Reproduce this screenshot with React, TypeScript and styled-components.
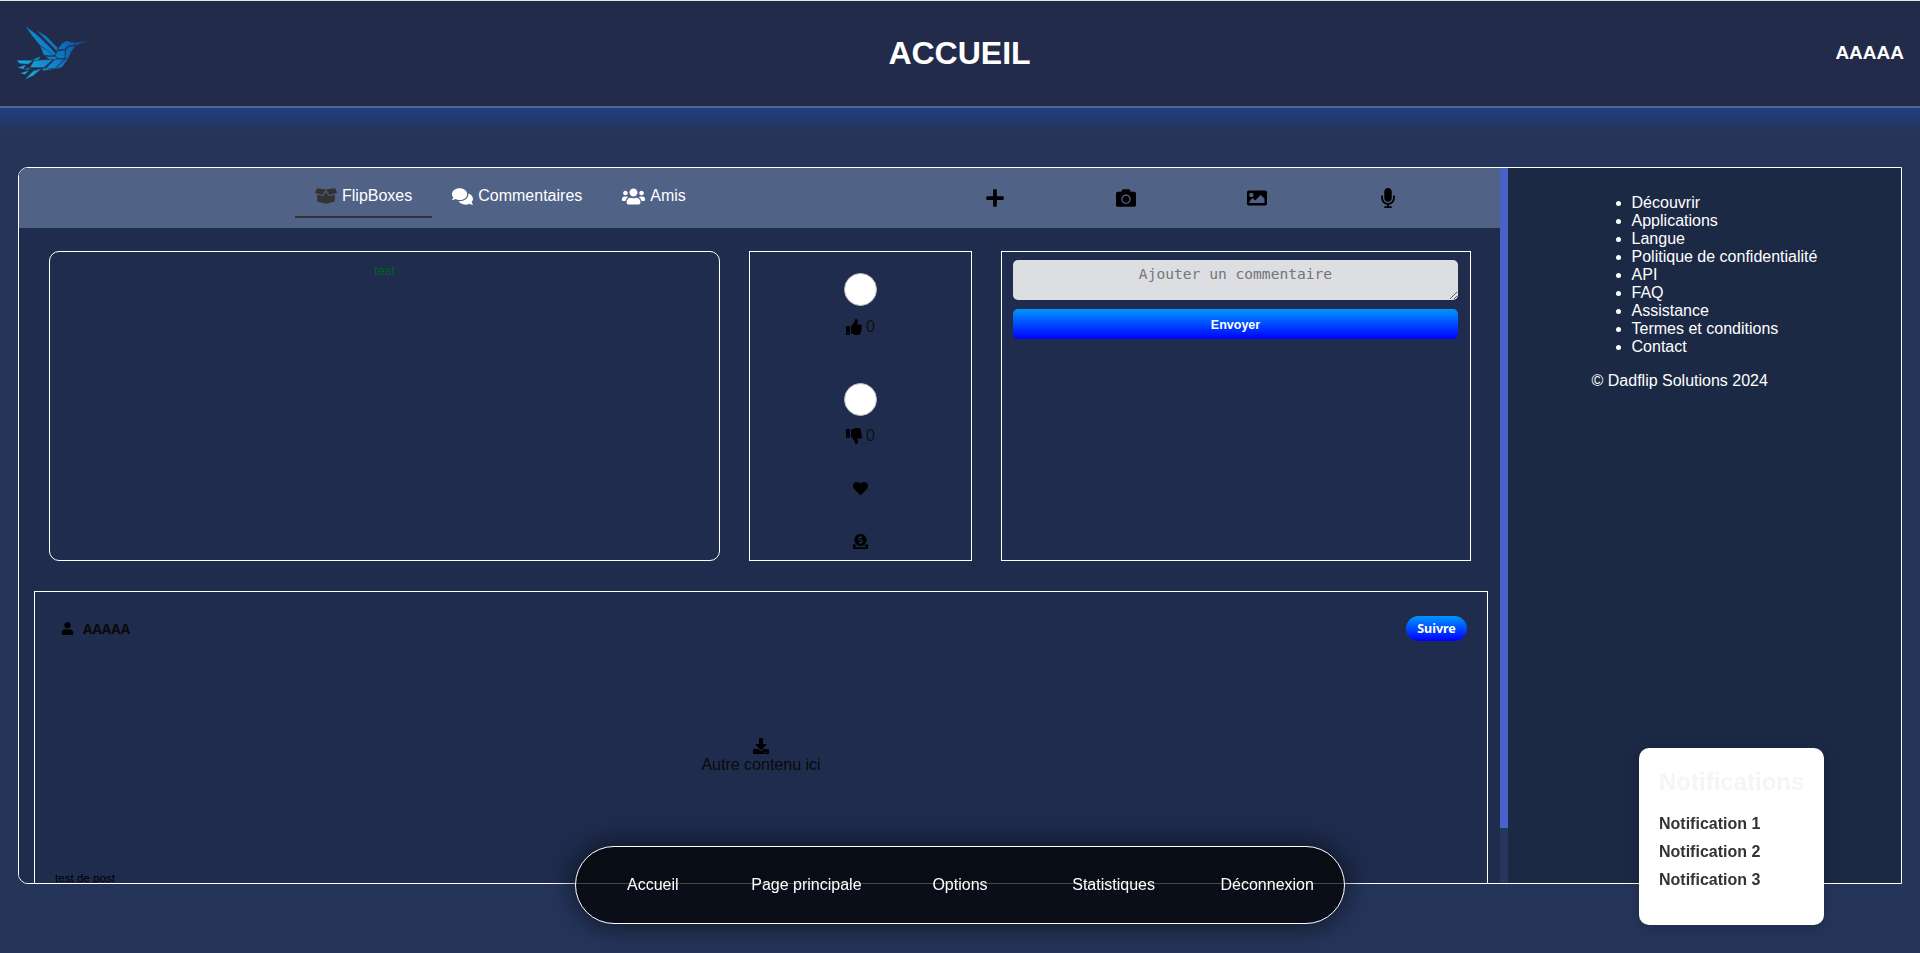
import React from 'react';
import styled, { createGlobalStyle } from 'styled-components';
import {
  FaBoxOpen, FaComments, FaUsers, FaPlus, FaCamera, FaImage, FaMicrophone,
  FaThumbsUp, FaThumbsDown, FaHeart, FaDonate, FaUser, FaDownload,
} from 'react-icons/fa';

const Global = createGlobalStyle`
  html, body { margin: 0; padding: 0; height: 953px; overflow: hidden; }
  body { background: #25355a; font-family: "Liberation Sans", Arial, sans-serif; color: #fff; }
  * { box-sizing: border-box; }
`;

const Page = styled.div`
  height: 953px;
  display: flex;
  flex-direction: column;
`;

const Header = styled.header`
  height: 108px;
  flex: none;
  display: grid;
  grid-template-columns: 1fr auto 1fr;
  align-items: center;
  padding: 0 16px 2px 15px;
  background: #222c4a;
  border-top: 1px solid #e4e4e4;
  border-bottom: 2px solid #56668c;
`;

const LogoMark = styled.svg`
  display: block;
  width: 75px;
  height: 57px;
`;

const Title = styled.h1`
  margin: 2px 0 0;
  font-size: 32px;
  font-weight: 700;
  line-height: 37px;
`;

const UserName = styled.div`
  justify-self: end;
  font-size: 19px;
  font-weight: 700;
`;

const Glow = styled.div`
  flex: none;
  height: 59px;
  background: linear-gradient(180deg, #1f4080 0, #25355a 24px);
`;

const Panel = styled.main`
  flex: none;
  height: 717px;
  margin: 0 18px;
  display: flex;
  border: 1px solid #fff;
  border-radius: 10px 0 0 10px;
  overflow: hidden;
`;

const Column = styled.section`
  flex: none;
  width: 1481px;
  height: 100%;
  overflow: hidden;
  background: #1f2c4e;
`;

const ScrollTrack = styled.div`
  flex: none;
  width: 8px;
  background: #27365c;
`;

const ScrollThumb = styled.div`
  height: 660px;
  background: #4862c8;
`;

const TabBar = styled.nav`
  height: 60px;
  display: flex;
  align-items: center;
  background: #516287;
`;

const Tabs = styled.div`
  display: flex;
  align-self: stretch;
  margin-left: 276px;
`;

const Tab = styled.div<{ $active?: boolean; $icon: number }>`
  height: 50px;
  display: flex;
  align-items: center;
  gap: 5px;
  padding: 8px 20px 0;
  font-size: 16px;
  color: #fff;
  border-bottom: 2px solid ${(p) => (p.$active ? '#333' : 'transparent')};
  svg {
    font-size: ${(p) => p.$icon}px;
    color: ${(p) => (p.$active ? '#333' : '#fff')};
  }
`;

const Actions = styled.div`
  display: grid;
  grid-template-columns: repeat(4, 131px);
  margin-left: auto;
  padding-right: 47px;
`;

const Action = styled.div`
  display: flex;
  justify-content: center;
  color: #000;
  font-size: 20px;
`;

const Row = styled.div`
  display: flex;
  gap: 29px;
  padding: 23px 0 0 30px;
`;

const MediaBox = styled.div`
  width: 671px;
  height: 310px;
  padding-top: 11px;
  border: 1px solid #fff;
  border-radius: 10px;
  text-align: center;
  font-size: 13px;
  line-height: 15px;
  color: #006420;
`;

const ReactionBox = styled.div`
  width: 223px;
  height: 310px;
  padding-top: 21px;
  border: 1px solid #fff;
  display: flex;
  flex-direction: column;
  align-items: center;
`;

const Circle = styled.div<{ $gap?: number }>`
  width: 33px;
  height: 33px;
  border-radius: 50%;
  background: #fff;
  border: 1px solid #bbb;
  margin-top: ${(p) => p.$gap ?? 0}px;
`;

const Count = styled.div<{ $top: number }>`
  display: flex;
  align-items: center;
  gap: 4px;
  height: 16px;
  margin-top: ${(p) => p.$top}px;
  color: #111;
  font-size: 16px;
  svg { font-size: 16px; color: #000; }
`;

const ReactionIcon = styled.div<{ $top: number }>`
  display: flex;
  margin-top: ${(p) => p.$top}px;
  color: #000;
  font-size: 15px;
`;

const CommentBox = styled.div`
  width: 470px;
  height: 310px;
  padding: 8px 12px 8px 11px;
  border: 1px solid #fff;
`;

const CommentInput = styled.textarea`
  display: block;
  width: 100%;
  height: 40px;
  padding: 4px 4px;
  border: none;
  border-radius: 5px;
  background: #dcdee2;
  text-align: center;
  font-family: "DejaVu Sans Mono", "Liberation Mono", monospace;
  font-size: 14.6px;
  line-height: 19px;
  &::placeholder { color: #757575; }
`;

const SendButton = styled.button`
  display: block;
  width: 100%;
  height: 30px;
  margin-top: 9px;
  padding: 2px 0 0;
  border: none;
  border-radius: 5px;
  background: linear-gradient(180deg, #0096ff, #0000ff);
  color: #fff;
  font-family: "Liberation Sans", Arial, sans-serif;
  font-size: 12.5px;
  font-weight: 700;
`;

const Post = styled.article`
  height: 352px;
  margin: 30px 12px 0 15px;
  padding: 24px 20px 0 26px;
  border: 1px solid #fff;
  color: #000;
`;

const PostHeader = styled.div`
  display: flex;
  align-items: center;
  justify-content: space-between;
  height: 25px;
`;

const Author = styled.div`
  display: flex;
  align-items: center;
  gap: 9px;
  font-family: "Noto Sans", sans-serif;
  font-size: 13.6px;
  font-weight: 700;
  color: #0a0a0a;
  svg { font-size: 13px; color: #000; }
`;

const FollowButton = styled.button`
  width: 61px;
  height: 25px;
  padding: 0;
  border: none;
  border-radius: 13px;
  background: linear-gradient(180deg, #0096ff, #0000ff);
  color: #fff;
  font-family: "Noto Sans", sans-serif;
  font-size: 12.5px;
  font-weight: 700;
`;

const PostBody = styled.div`
  margin-top: 97px;
  padding-right: 6px;
  display: flex;
  flex-direction: column;
  align-items: center;
  font-size: 16px;
  line-height: 18px;
  color: #0a0a0a;
  svg { display: block; margin-bottom: 2px; font-size: 16px; color: #000; }
`;

const PostCaption = styled.div`
  margin: 97px 0 0 -6px;
  font-size: 11.6px;
  line-height: 14px;
  color: #000;
`;

const Sidebar = styled.aside`
  flex: 1;
  background: #1c2945;
  display: flex;
  flex-direction: column;
  align-items: center;
  padding-top: 26px;
  font-size: 16px;
  line-height: 18px;
`;

const SideContent = styled.div`
  width: fit-content;
`;

const SideList = styled.ul`
  margin: 0 0 16px;
  padding-left: 40px;
`;

const Copyright = styled.div`
  white-space: nowrap;
`;

const BottomNav = styled.nav`
  position: fixed;
  left: 575px;
  bottom: 29px;
  width: 770px;
  height: 78px;
  display: grid;
  grid-template-columns: repeat(5, 1fr);
  align-items: center;
  border: 1px solid #fff;
  border-radius: 39px;
  background: rgba(0, 0, 0, 0.72);
  box-shadow: 0 0 30px rgba(0, 0, 0, 0.7);
`;

const NavItem = styled.div`
  text-align: center;
  font-size: 16px;
  color: #fff;
`;

const Notifications = styled.div`
  position: fixed;
  left: 1639px;
  top: 748px;
  width: 185px;
  height: 177px;
  padding: 20px;
  background: #fff;
  border-radius: 10px;
  box-shadow: 0 4px 16px rgba(0, 0, 0, 0.2);
`;

const NotifTitle = styled.h2`
  margin: 0 0 14px;
  font-size: 24px;
  line-height: 28px;
  font-weight: 700;
  color: #f5f5f5;
`;

const NotifItem = styled.div`
  height: 28px;
  font-size: 16px;
  line-height: 28px;
  font-weight: 700;
  color: #333;
  white-space: nowrap;
`;

const shards = [
  '75,80 110,106 148,142 170,166 160,168 120,138 98,112',
  '108,92 140,112 172,144 174,160',
  '120,140 164,170 132,168',
  '135,172 168,172 172,181 150,181',
  '172,152 186,132 200,125 222,130 226,138 205,140 195,150',
  '224,131 268,124 226,139',
  '198,152 206,142 226,141 212,160 205,178 195,178',
  '172,156 196,152 194,178 175,178 166,170',
  '196,180 205,178 186,204 165,210',
  '165,180 194,180 165,208 135,210',
  '102,184 160,180 132,205 90,205',
  '128,208 132,207 160,210 128,215',
  '50,183 100,183 85,195 58,193',
  '52,205 78,197 70,210',
  '60,222 88,213 75,226',
  '75,240 100,215 125,208 100,230',
  '100,180 122,171 116,182 102,184',
  '84,206 70,212 92,210',
];

const Logo = () => (
  <LogoMark viewBox="45 75 225 170" aria-label="Dadflip">
    <defs>
      <linearGradient id="bird" gradientUnits="userSpaceOnUse" x1="60" y1="240" x2="260" y2="120">
        <stop offset="0" stopColor="#18b4dc" />
        <stop offset="0.5" stopColor="#1080c8" />
        <stop offset="1" stopColor="#0a4ca4" />
      </linearGradient>
    </defs>
    {shards.map((points) => (
      <polygon key={points} points={points} fill="url(#bird)" stroke="#222c4a" strokeWidth="1" />
    ))}
  </LogoMark>
);

const sideLinks = [
  'Découvrir', 'Applications', 'Langue', 'Politique de confidentialité', 'API',
  'FAQ', 'Assistance', 'Termes et conditions', 'Contact',
];
const navLinks = ['Accueil', 'Page principale', 'Options', 'Statistiques', 'Déconnexion'];

export default function App() {
  return (
    <Page>
      <Global />
      <Header>
        <Logo />
        <Title>ACCUEIL</Title>
        <UserName>AAAAA</UserName>
      </Header>
      <Glow />
      <Panel>
        <Column>
          <TabBar>
            <Tabs>
              <Tab $active $icon={22}><FaBoxOpen />FlipBoxes</Tab>
              <Tab $icon={21}><FaComments />Commentaires</Tab>
              <Tab $icon={23}><FaUsers />Amis</Tab>
            </Tabs>
            <Actions>
              <Action><FaPlus /></Action>
              <Action><FaCamera /></Action>
              <Action><FaImage /></Action>
              <Action><FaMicrophone /></Action>
            </Actions>
          </TabBar>
          <Row>
            <MediaBox>test</MediaBox>
            <ReactionBox>
              <Circle />
              <Count $top={13}><FaThumbsUp />0</Count>
              <Circle $gap={48} />
              <Count $top={12}><FaThumbsDown />0</Count>
              <ReactionIcon $top={37}><FaHeart /></ReactionIcon>
              <ReactionIcon $top={38}><FaDonate /></ReactionIcon>
            </ReactionBox>
            <CommentBox>
              <CommentInput placeholder="Ajouter un commentaire" />
              <SendButton>Envoyer</SendButton>
            </CommentBox>
          </Row>
          <Post>
            <PostHeader>
              <Author><FaUser />AAAAA</Author>
              <FollowButton>Suivre</FollowButton>
            </PostHeader>
            <PostBody>
              <FaDownload />
              Autre contenu ici
            </PostBody>
            <PostCaption>test de post</PostCaption>
          </Post>
        </Column>
        <ScrollTrack>
          <ScrollThumb />
        </ScrollTrack>
        <Sidebar>
          <SideContent>
            <SideList>
              {sideLinks.map((l) => <li key={l}>{l}</li>)}
            </SideList>
            <Copyright>© Dadflip Solutions 2024</Copyright>
          </SideContent>
        </Sidebar>
      </Panel>
      <BottomNav>
        {navLinks.map((l) => <NavItem key={l}>{l}</NavItem>)}
      </BottomNav>
      <Notifications>
        <NotifTitle>Notifications</NotifTitle>
        <NotifItem>Notification 1</NotifItem>
        <NotifItem>Notification 2</NotifItem>
        <NotifItem>Notification 3</NotifItem>
      </Notifications>
    </Page>
  );
}
